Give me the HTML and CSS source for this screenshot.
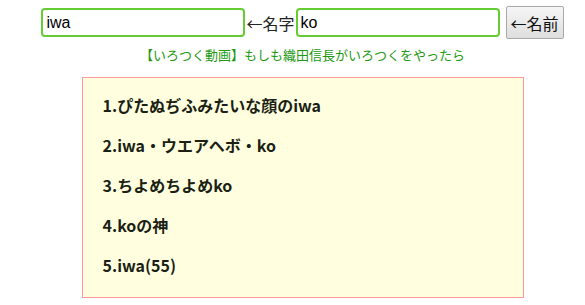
FILE: index.html
```html
<!DOCTYPE html>
<html lang="ja">
<head>
<meta charset="utf-8">
<title>名前</title>
<link rel="stylesheet" href="styles.css">
</head>
<body>
<div class="page">
  <form class="row">
    <input class="name-input" type="text" value="iwa">
    <span class="label">←名字</span>
    <input class="name-input" type="text" value="ko">
    <button class="btn" type="button">←名前</button>
  </form>
  <p class="link">【いろつく動画】もしも織田信長がいろつくをやったら</p>
  <ul class="results">
    <li>1.ぴたぬぢふみたいな顔のiwa</li>
    <li>2.iwa・ウエアヘボ・ko</li>
    <li>3.ちよめちよめko</li>
    <li>4.koの神</li>
    <li>5.iwa(55)</li>
  </ul>
</div>
</body>
</html>
```

FILE: styles.css
```css
html, body {
  margin: 0;
  padding: 0;
  background: #fff;
}
.page {
  padding-left: 20px;
  font-family: "Noto Sans CJK JP", sans-serif;
  color: #222;
}
.row {
  display: flex;
  justify-content: center;
  align-items: center;
  margin: 6px 0 0 0;
  height: 33px;
}
.name-input {
  box-sizing: border-box;
  width: 204px;
  height: 29px;
  border: 2px solid #66cc33;
  border-radius: 4px;
  padding: 0 3px;
  font-family: "Liberation Sans", Arial, sans-serif;
  font-size: 16px;
  color: #000;
  background: #fff;
  outline: none;
}
.label {
  font-size: 16px;
  line-height: 20px;
  margin: 0 1px;
  color: #222;
}
.btn {
  box-sizing: border-box;
  margin-left: 6px;
  width: 58px;
  height: 33px;
  padding: 0;
  font-family: "Noto Sans CJK JP", sans-serif;
  font-size: 16px;
  color: #111;
  border: 1px solid #a9a9a9;
  border-radius: 2px;
  background: linear-gradient(#f6f6f6, #dedede);
}
.link {
  margin: 7px 0 0 0;
  text-align: center;
  font-size: 13px;
  line-height: 18px;
  color: #229911;
}
.results {
  list-style: none;
  box-sizing: border-box;
  width: 442px;
  height: 221px;
  margin: 13px auto 0 auto;
  padding: 7px 0 0 20px;
  border: 1px solid #ff9999;
  background: #ffffe0;
}
.results li {
  font-size: 16px;
  font-weight: bold;
  line-height: 40px;
  height: 40px;
  color: #1c1f14;
}
```
